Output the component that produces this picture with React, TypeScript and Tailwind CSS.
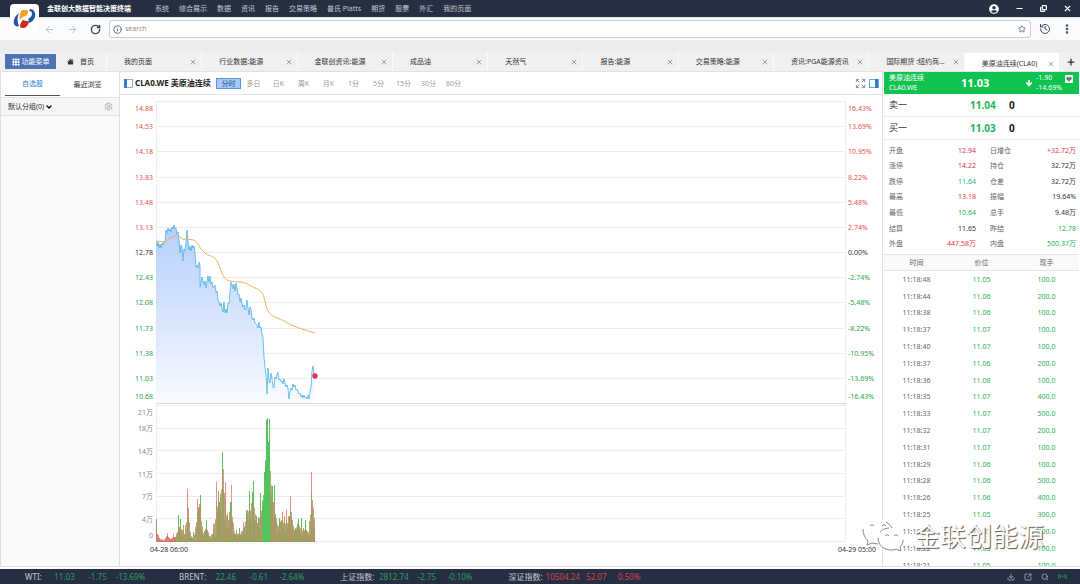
import { useState } from "react"
import type { ReactNode } from "react"
import {
  ArrowDown,
  ArrowLeft,
  ArrowRight,
  ChevronDown,
  Copy,
  Download,
  Expand,
  Heart,
  History,
  Info,
  Minus,
  MoreVertical,
  Plus,
  RotateCw,
  Search,
  Settings,
  SquareArrowOutUpRight,
  Star,
  X,
} from "lucide-react"
import { FaUserCircle } from "react-icons/fa"
import { BsGrid3X3GapFill, BsHouseFill } from "react-icons/bs"

const menu = ["系统", "综合展示", "数据", "资讯", "报告", "交易策略", "普氏 Platts", "期货", "股票", "外汇", "我的页面"]

const tabs = [
  "我的页面",
  "行业数据:能源",
  "金联创资讯:能源",
  "成品油",
  "天然气",
  "报告:能源",
  "交易策略:能源",
  "资讯:PGA能源资讯",
  "国际期货 :纽约商...",
  "美原油连续(CLA0)",
]

const periods = ["分时", "多日", "日K", "周K", "月K", "1分", "5分", "15分", "30分", "60分"]

const priceLabels = ["14.88", "14.53", "14.18", "13.83", "13.48", "13.13", "12.78", "12.43", "12.08", "11.73", "11.38", "11.03", "10.68"]
const percentLabels = ["16.43%", "13.69%", "10.95%", "8.22%", "5.48%", "2.74%", "0.00%", "-2.74%", "-5.48%", "-8.22%", "-10.95%", "-13.69%", "-16.43%"]
const volumeLabels = ["21万", "18万", "14万", "11万", "7万", "4万", "0"]

const PRICE_H = 302
const VOL_TOP = 304
const VOL_H = 137
const CHART_H = VOL_TOP + VOL_H

const priceLine =
  "0,141 1,145 2,141 3,147 4,143 5,147 6,142 7,144 8,141 9,140 10,129 11,132 12,127 13,130 14,128 15,131 16,126 17,128 18,124 19,128 20,127 21,133 22,131 23,139 24,152 25,144 26,147 27,160 28,148 29,150 30,141 31,129 32,141 33,149 34,145 35,150 36,144 37,147 38,145 39,152 40,166 41,164 42,167 43,161 44,165 44,186 45,181 46,176 47,180 48,184 49,180 50,187 51,181 52,175 53,181 54,175 55,183 56,181 57,187 58,186 59,184 60,192 61,190 62,199 63,201 64,205 65,202 66,208 67,211 68,201 69,212 70,208 71,212 72,202 73,203 74,192 75,181 76,184 77,188 78,183 79,190 80,182 81,187 82,194 83,193 84,201 85,197 86,203 87,206 88,204 89,209 90,207 91,199 92,207 93,214 94,206 95,208 96,217 97,219 98,217 99,222 101,224 102,227 103,221 104,227 105,226 106,233 107,237 108,256 109,267 110,274 111,293 112,267 113,279 114,282 115,272 116,278 117,286 118,287 119,276 120,278 121,273 122,271 123,279 124,278 125,281 126,280 127,283 128,278 129,282 130,286 131,284 132,288 133,298 134,290 135,287 136,289 137,283 138,286 139,284 140,289 141,288 142,291 143,293 144,292 145,296 146,294 147,297 148,294 149,297 150,296 151,298 152,294 153,298 154,292 155,286 156,270 157,265 158,275"

const averageLine =
  "M0,140 L9,141 C13,139 13,136 16,136 C20,135 21,133 23,135 C26,138 27,139 30,138 L38,139 C43,142 43,147 47,150 C50,154 53,154 57,156 C63,159 63,168 68,176 C71,181 76,180 84,181 C92,182 94,185 99,187 C106,190 107,192 109,200 C111,212 114,214 121,217 C132,221 132,223 138,225 L146,228 L159,232"

// one bar per minute
const volumes = [
  23, 4, 3, 4, 2, 3, 2, 2, 1, 2, 6, 9, 5, 3, 2, 2, 4, 8, 5, 3, 5, 6, 27, 12, 23, 10, 5, 17, 8, 3, 7, 53, 34, 8, 5, 4, 3, 10, 2, 10,
  14, 43, 35, 38, 47, 12, 7, 6, 10, 13, 22, 12, 8, 6, 4, 3, 8, 18, 7, 5, 60, 30, 51, 40, 43, 30, 90, 73, 22, 60, 14, 29, 14, 20, 40, 57, 20, 9, 7, 8,
  12, 5, 6, 14, 6, 9, 8, 20, 14, 9, 32, 32, 22, 51, 24, 20, 50, 61, 22, 20, 26, 16, 24, 14, 49, 26, 35, 40, 70, 76, 122, 124, 100, 123, 50, 45, 56, 24, 57, 28,
  20, 8, 12, 24, 20, 22, 30, 14, 26, 10, 32, 14, 18, 26, 46, 30, 18, 12, 10, 14, 12, 18, 23, 12, 8, 24, 6, 12, 10, 22, 12, 8, 7, 6, 20, 70, 42, 20, 14,
]
const redMinutes = new Set([
  1, 2, 4, 5, 7, 10, 11, 12, 16, 17, 25, 27, 31, 32, 40, 41, 43, 49, 51, 57, 60, 61, 65, 67, 69, 71, 73, 75, 76, 80, 87, 91, 95, 99, 101, 105,
  115, 117, 119, 120, 122, 124, 126, 128, 130, 132, 134, 135, 137, 139, 144, 146, 148, 151, 153, 154, 155, 156, 157,
])

const details = [
  ["开盘", "12.94", "red", "日增仓", "+32.72万", "red"],
  ["涨停", "14.22", "red", "持仓", "32.72万", "ink"],
  ["跌停", "11.64", "green", "仓差", "32.72万", "ink"],
  ["最高", "13.18", "red", "振幅", "19.64%", "ink"],
  ["最低", "10.64", "green", "总手", "9.48万", "ink"],
  ["结算", "11.65", "ink", "昨结", "12.78", "green"],
  ["外盘", "447.58万", "red", "内盘", "500.37万", "green"],
]

const tone: Record<string, string> = {
  red: "text-[#e0393f]",
  green: "text-[#22b356]",
  ink: "text-[#333333]",
}

const ticks = [
  ["11:18:48", "11.05", "100.0"],
  ["11:18:44", "11.06", "200.0"],
  ["11:18:38", "11.06", "100.0"],
  ["11:18:37", "11.07", "100.0"],
  ["11:18:40", "11.07", "100.0"],
  ["11:18:37", "11.06", "200.0"],
  ["11:18:36", "11.08", "100.0"],
  ["11:18:35", "11.07", "400.0"],
  ["11:18:33", "11.07", "500.0"],
  ["11:18:32", "11.07", "200.0"],
  ["11:18:31", "11.07", "100.0"],
  ["11:18:29", "11.06", "100.0"],
  ["11:18:28", "11.06", "500.0"],
  ["11:18:26", "11.06", "400.0"],
  ["11:18:25", "11.05", "300.0"],
  ["11:18:24", "11.05", "300.0"],
  ["11:18:22", "11.05", "100.0"],
  ["11:18:21", "11.05", "100.0"],
]

const quotes = [
  { name: "WTI:", values: ["11.03", "-1.75", "-13.69%"], up: false },
  { name: "BRENT:", values: ["22.46", "-0.61", "-2.64%"], up: false },
  { name: "上证指数:", values: ["2812.74", "-2.75", "-0.10%"], up: false },
  { name: "深证指数:", values: ["10504.24", "52.07", "0.50%"], up: true },
]

function IconButton({ label, children, className = "" }: { label: string; children: ReactNode; className?: string }) {
  return (
    <button type="button" aria-label={label} className={`flex shrink-0 items-center justify-center ${className}`}>
      {children}
    </button>
  )
}

function Logo() {
  return (
    <div className="absolute left-[10px] top-[4px] z-10 flex h-[29px] w-[29px] items-center justify-center rounded-[4px] bg-white">
      <svg viewBox="0 0 24 20" className="h-[20px] w-[24px]" aria-hidden="true">
        <path d="M6 4C2 7 0 11 1 15c1 2 3 3 5 2C4 13 4 8 6 4z" fill="#2455a4" />
        <path d="M9 1h5c2 1 1 4-1 6-2 0-4 1-6 4C6 7 7 3 9 1z" fill="#f2a32c" />
        <path d="M17 0c4 0 6 4 5 8-1 3-3 5-6 6 0-2 0-3-1-4 2-1 4-3 4-5s-1-3-3-3z" fill="#2455a4" />
        <path d="M7 18c0-3 1-5 3-7 2 1 4 1 6 1 0 3-2 6-5 7-2 0-3 0-4-1z" fill="#cf2a27" />
      </svg>
    </div>
  )
}

function TitleBar() {
  return (
    <header className="flex h-[17px] shrink-0 items-center bg-[#262f42] pl-[47px] pr-[8px] text-[#c3c8d1]">
      <h1 className="w-[108px] whitespace-nowrap font-bold text-white">金联创大数据智能决策终端</h1>
      <nav className="flex flex-1 gap-[10px] whitespace-nowrap">
        {menu.map((item) => (
          <a key={item} href="#">
            {item}
          </a>
        ))}
      </nav>
      <div className="flex items-center gap-4 text-white">
        <IconButton label="账户">
          <FaUserCircle size={10} />
        </IconButton>
        <IconButton label="最小化">
          <Minus size={9} strokeWidth={3} />
        </IconButton>
        <IconButton label="还原">
          <Copy size={7} strokeWidth={4} className="-scale-x-100 rotate-180" />
        </IconButton>
        <IconButton label="关闭">
          <X size={9} strokeWidth={3} />
        </IconButton>
      </div>
    </header>
  )
}

function AddressBar() {
  return (
    <div className="flex h-[23px] shrink-0 items-center border-t border-[#dfe5ee] bg-[#fafbfd] pl-[44px] pr-[7px] text-[#3a4863]">
      <IconButton label="后退" className="w-[11px] text-[#b9bdc4]">
        <ArrowLeft size={11} />
      </IconButton>
      <IconButton label="前进" className="ml-3 w-[11px] text-[#b9bdc4]">
        <ArrowRight size={11} />
      </IconButton>
      <IconButton label="刷新" className="ml-3 w-[11px]">
        <RotateCw size={11} strokeWidth={3} />
      </IconButton>
      <label className="ml-2 flex h-[18px] flex-1 items-center rounded-[3px] border border-[#c9ccd2] bg-white pl-[3px] pr-[4px]">
        <Info size={9} />
        <input type="text" placeholder="search" aria-label="search" className="ml-[3px] min-w-0 flex-1 outline-none placeholder:text-[#8d9096]" />
        <Star size={8} />
      </label>
      <IconButton label="历史" className="ml-2 w-[12px]">
        <History size={12} />
      </IconButton>
      <IconButton label="更多" className="ml-[10px] w-[12px]">
        <MoreVertical size={12} strokeWidth={3} />
      </IconButton>
    </div>
  )
}

function TabBar({ active, onSelect }: { active: string; onSelect: (tab: string) => void }) {
  return (
    <div className="flex h-[32px] shrink-0 items-end border-b border-[#e2e2e2] bg-[#ececec] text-[#333333]">
      <div className="flex h-[19px] flex-1 bg-[#f0f0f1]">
        <button type="button" className="my-[2px] ml-[5px] flex w-[51px] items-center justify-center gap-[2px] bg-[#4d73b5] text-white">
          <BsGrid3X3GapFill size={8} />
          功能菜单
        </button>
        <a href="#" className="flex w-[51px] items-center gap-[6px] border-r border-[#fafafa] pl-[11px]">
          <BsHouseFill size={7} />
          首页
        </a>
        {tabs.map((tab) => (
          <div
            key={tab}
            className={`flex min-w-0 flex-1 items-center pl-[17px] pr-[4px] ${
              tab === active ? "mt-[1px] bg-white pt-[3px]" : "border-r border-[#fafafa]"
            }`}
          >
            <button type="button" onClick={() => onSelect(tab)} className="flex-1 whitespace-nowrap text-left">
              {tab}
            </button>
            <IconButton label={`关闭${tab}`} className="text-[#777777]">
              <X size={8} />
            </IconButton>
          </div>
        ))}
        <IconButton label="新建标签" className="w-[21px] pl-1">
          <Plus size={10} strokeWidth={3} />
        </IconButton>
      </div>
    </div>
  )
}

function Sidebar() {
  return (
    <aside className="flex w-[120px] shrink-0 flex-col border-x border-b border-[#dedede] bg-[#fafafa]">
      <div className="flex h-[25px] shrink-0 bg-white px-1">
        <button type="button" className="my-[1px] w-[55px] border-b border-[#555555] text-[#2f7fd6]">
          自选股
        </button>
        <button type="button" className="flex-1 text-[#333333]">
          最近浏览
        </button>
      </div>
      <div className="flex h-[19px] shrink-0 items-center border-y border-[#e2e2e2] bg-[#f5f5f5] pl-[7px] pr-[6px]">
        <select aria-label="分组" className="appearance-none bg-transparent text-[#333333] outline-none">
          <option>默认分组(0)</option>
        </select>
        <ChevronDown size={8} strokeWidth={4} className="pointer-events-none" />
        <IconButton label="设置" className="ml-auto text-[#999999]">
          <Settings size={9} />
        </IconButton>
      </div>
    </aside>
  )
}

function rowY(index: number, count: number, top: number, height: number) {
  // end labels are kept inside the plot
  if (index === 0) return top + 7
  if (index === count - 1) return top + height - 7
  return top + (height * index) / (count - 1)
}

function trendColor(index: number) {
  if (index < 6) return "fill-[#e8504f]"
  if (index === 6) return "fill-[#333333]"
  return "fill-[#2ba245]"
}

function LeftAxis() {
  return (
    <svg width="36" height={CHART_H} className="shrink-0 text-[7px]">
      {priceLabels.map((label, i) => (
        <text key={label} x="33" y={rowY(i, 13, 0, PRICE_H) + 3} textAnchor="end" className={trendColor(i)}>
          {label}
        </text>
      ))}
      {volumeLabels.map((label, i) => (
        <text key={label} x="33" y={rowY(i, 7, VOL_TOP, VOL_H) + 3} textAnchor="end" className="fill-[#888888]">
          {label}
        </text>
      ))}
    </svg>
  )
}

function RightAxis() {
  return (
    <svg width="36" height={CHART_H} className="shrink-0 text-[7px]">
      {percentLabels.map((label, i) => (
        <text key={label} x="2" y={rowY(i, 13, 0, PRICE_H) + 3} className={trendColor(i)}>
          {label}
        </text>
      ))}
    </svg>
  )
}

function Plot() {
  const base = CHART_H
  return (
    <svg viewBox={`0 0 690 ${CHART_H}`} preserveAspectRatio="none" height={CHART_H} className="min-w-0 flex-1">
      <defs>
        <linearGradient id="area" x1="0" y1="0" x2="0" y2="1">
          <stop offset="0" stopColor="#a9c6fa" />
          <stop offset="1" stopColor="#f8faff" />
        </linearGradient>
      </defs>
      <g stroke="#ededed" strokeWidth="1" shapeRendering="crispEdges">
        {priceLabels.map((label, i) => (
          <line key={label} x1="0" x2="690" y1={(PRICE_H * i) / 12 + 0.5} y2={(PRICE_H * i) / 12 + 0.5} />
        ))}
        {volumeLabels.map((label, i) => {
          const y = VOL_TOP + ((VOL_H - 1) * i) / 6 + 0.5
          return <line key={label} x1="0" x2="690" y1={y} y2={y} />
        })}
        <line x1="0" x2="690" y1={PRICE_H + 0.5} y2={PRICE_H + 0.5} stroke="#d8d8d8" />
        <line x1="0.5" x2="0.5" y1="0" y2={base} />
        <line x1="689.5" x2="689.5" y1="0" y2={base} />
      </g>
      <polygon points={`0,${PRICE_H} ${priceLine} 158,${PRICE_H}`} fill="url(#area)" fillOpacity="0.85" />
      <polyline points={priceLine} fill="none" stroke="#4bb3e6" strokeWidth="0.8" />
      <path d={averageLine} fill="none" stroke="#edb258" strokeWidth="1" />
      <circle cx="159" cy="275" r="2.7" fill="#e5354a" />
      {volumes.map((v, i) => {
        const near = volumes.slice(Math.max(i - 2, 0), i + 3)
        const body = Math.max(v * 0.7, (near.reduce((sum, n) => sum + n, 0) / near.length) * 0.95)
        const peak = i > 105 && i < 114
        return (
          <g key={i}>
            <rect x={i} y={base - v} width="1" height={v} fill={redMinutes.has(i) ? "#ee8d87" : "#5cbf62"} />
            <rect
              x={i}
              y={base - body}
              width="1"
              height={body}
              fill={peak ? "#4fc45a" : i < 20 ? "#dd7468" : i % 4 === 0 ? "#c98a68" : "#9a9f5e"}
              fillOpacity="0.85"
            />
          </g>
        )
      })}
    </svg>
  )
}

function ChartPanel() {
  const [period, setPeriod] = useState("分时")
  return (
    <main className="flex min-w-0 flex-1 flex-col border-b border-[#e4e4e4] bg-white">
      <div className="flex h-[23px] shrink-0 items-center border-b border-[#e4e4e4] pl-[4px] pr-[3px]">
        <svg width="9" height="9" aria-hidden="true">
          <rect x="0.5" y="0.5" width="8" height="8" fill="#ffffff" stroke="#8ab8e4" />
          <rect width="3" height="9" fill="#2f7bd0" />
        </svg>
        <h2 className="ml-[2px] mr-[3px] w-[78px] whitespace-nowrap text-[8px] font-bold text-[#222222]">CLA0.WE 美原油连续</h2>
        {periods.map((p) => (
          <button
            key={p}
            type="button"
            onClick={() => setPeriod(p)}
            className={`h-[11px] w-[25px] border ${
              p === period ? "border-[#5b93dd] bg-[#a6c8f7] text-[#234a85]" : "border-transparent text-[#999999]"
            }`}
          >
            {p}
          </button>
        ))}
        <IconButton label="全屏" className="ml-auto mr-[3px] text-[#888888]">
          <Expand size={11} strokeWidth={2} />
        </IconButton>
        <IconButton label="侧栏">
          <svg width="10" height="9" aria-hidden="true">
            <rect x="0.5" y="0.5" width="9" height="8" fill="#ffffff" stroke="#6ba6dd" />
            <rect x="6" width="3" height="9" fill="#2f7bd0" />
          </svg>
        </IconButton>
      </div>
      <div className="flex pt-[6px]">
        <LeftAxis />
        <Plot />
        <RightAxis />
      </div>
      <div className="flex justify-between pl-[30px] pr-[6px] pt-[3px] text-[#333333]">
        <span>04-28 06:00</span>
        <span>04-29 05:00</span>
      </div>
    </main>
  )
}

function QuotePanel() {
  return (
    <section className="flex w-[198px] shrink-0 flex-col overflow-hidden border-b border-l border-[#e0e0e0] bg-white pl-[1px] pr-[1px]">
      <div className="flex h-[22px] shrink-0 items-center bg-[#10c250] pl-[5px] pr-[6px] text-white">
        <div className="w-[72px]">
          <div>美原油连续</div>
          <div>CLA0.WE</div>
        </div>
        <strong className="flex-1 text-[11px]">11.03</strong>
        <ArrowDown size={8} strokeWidth={5} />
        <div className="ml-[3px] w-[29px]">
          <div>-1.90</div>
          <div>-14.69%</div>
        </div>
        <IconButton label="收藏" className="mb-[8px] h-[8px] w-[8px] rounded-[1px] bg-white text-[#777777]">
          <Heart size={6} fill="currentColor" />
        </IconButton>
      </div>
      {[
        ["卖一", "11.04"],
        ["买一", "11.03"],
      ].map(([side, price]) => (
        <div key={side} className="flex h-[23px] shrink-0 items-center border-b border-[#ebebeb] pl-[5px] text-[10px] font-bold text-[#222222]">
          <span className="w-[81px] text-[9px] font-normal text-[#333333]">{side}</span>
          <span className="w-[39px] text-[#22b356]">{price}</span>
          <span>0</span>
        </div>
      ))}
      <table className="mt-[3px] h-[109px] w-full shrink-0">
        <tbody>
          {details.map(([a, av, at, b, bv, bt]) => (
            <tr key={a}>
              <th className="w-[35px] pl-[5px] text-left font-normal text-[#666666]">{a}</th>
              <td className={`w-[57px] text-right ${tone[at]}`}>{av}</td>
              <th className="w-[48px] pl-[14px] text-left font-normal text-[#666666]">{b}</th>
              <td className={`pr-[3px] text-right ${tone[bt]}`}>{bv}</td>
            </tr>
          ))}
        </tbody>
      </table>
      <table className="mt-[2px] h-[320px] w-full shrink-0 table-fixed text-center">
        <thead>
          <tr className="h-[16px] border-y border-[#e4e4e4] bg-[#fafafa] text-[#666666]">
            <th className="font-normal">时间</th>
            <th className="font-normal">价位</th>
            <th className="font-normal">现手</th>
          </tr>
        </thead>
        <tbody>
          {ticks.map(([time, price, lots], i) => (
            <tr key={i} className="text-[#22b356]">
              <td className="text-[#666666]">{time}</td>
              <td>{price}</td>
              <td>{lots}</td>
            </tr>
          ))}
        </tbody>
      </table>
    </section>
  )
}

function StatusBar() {
  return (
    <footer className="mt-[2px] flex h-[15px] shrink-0 items-center gap-8 bg-[#262f42] pl-[25px] pr-[13px] text-[8px] text-[#c3c8d1]">
      {quotes.map((q) => (
        <div key={q.name} className="flex whitespace-nowrap">
          <span className="mr-[3px] min-w-[20px]">{q.name}</span>
          {q.values.map((v) => (
            <span key={v} className={`min-w-[33px] text-center ${q.up ? "text-[#d8414c]" : "text-[#2f9a5f]"}`}>
              {v}
            </span>
          ))}
        </div>
      ))}
      <div className="ml-auto flex items-center gap-[9px]">
        <IconButton label="下载">
          <Download size={8} />
        </IconButton>
        <IconButton label="分享">
          <SquareArrowOutUpRight size={8} />
        </IconButton>
        <IconButton label="搜索">
          <Search size={8} />
        </IconButton>
        <svg width="9" height="7" viewBox="0 0 18 14" fill="none" stroke="#2f9a5f" strokeWidth="2" aria-hidden="true">
          <path d="M3 2C0 5 0 9 3 12M6 4c-2 2-2 4 0 6M15 2c3 3 3 7 0 10M12 4c2 2 2 4 0 6" />
          <circle cx="9" cy="7" r="1" />
        </svg>
      </div>
    </footer>
  )
}

function Watermark() {
  return (
    <div className="pointer-events-none absolute bottom-[31px] right-[36px] flex items-center gap-[10px]">
      <svg width="42" height="34" viewBox="0 0 42 34" aria-hidden="true">
        <g fill="#ffffff" fillOpacity="0.9">
          <path d="M16 1C7 1 1 6 1 13c0 4 2 7 5 9l-1 4 5-2c2 1 4 1 7 1 8 0 15-5 15-12S25 1 16 1z" />
          <path d="M29 9c-8 0-13 5-13 11s6 11 13 11c2 0 4 0 5-1l5 2-1-4c2-2 4-5 4-8 0-6-6-11-13-11z" />
        </g>
        <g fill="none" stroke="#888888">
          <path d="M1 10c0 5 2 9 5 12l-1 4 5-2 6 1M24 3c3 2 5 4 6 6" />
          <path d="M16 19c0 7 6 12 13 12 2 0 4 0 5-1l5 2-1-4c2-2 3-4 3-7M18 13c2-2 5-4 9-4" />
          <path d="M8 7q2-3 4 0M20 7q2-3 4 0M23 17q2-3 4 0M32 17q2-3 4 0" />
        </g>
      </svg>
      <span className="text-[26px] leading-[32px] text-white [text-shadow:1px_1px_1px_#555555]">金联创能源</span>
    </div>
  )
}

export default function App() {
  const [active, setActive] = useState("美原油连续(CLA0)")
  return (
    <div className="relative flex h-screen flex-col overflow-hidden bg-white font-['Noto_Sans','Noto_Sans_CJK_SC',sans-serif] text-[7px] leading-[10px]">
      <Logo />
      <TitleBar />
      <AddressBar />
      <TabBar active={active} onSelect={setActive} />
      <div className="flex min-h-0 flex-1">
        <Sidebar />
        <ChartPanel />
        <QuotePanel />
      </div>
      <StatusBar />
      <Watermark />
    </div>
  )
}
